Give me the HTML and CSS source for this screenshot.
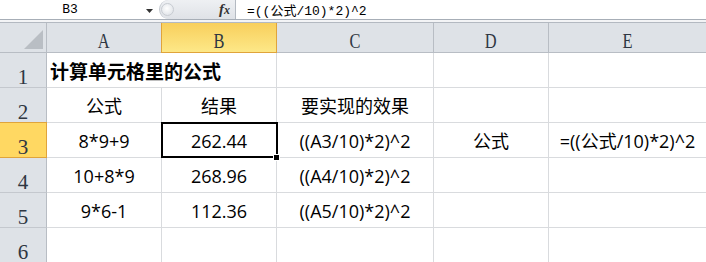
FILE: index.html
```html
<!DOCTYPE html>
<html lang="zh-CN">
<head>
<meta charset="utf-8">
<title>计算单元格里的公式</title>
<link rel="stylesheet" href="styles.css">
</head>
<body>
<div class="fbar">
  <div class="namebox">B3</div>
  <div class="nb-arrow"><svg width="7" height="4" viewBox="0 0 7 4"><polygon points="0,0 7,0 3.5,4" fill="#333"/></svg></div>
  <div class="fx-pill"><span class="knob"></span><span class="fx">f<span class="fx-x">x</span></span></div>
  <div class="formula">=((公式/10)*2)^2</div>
</div>
<div class="fbar-gap"></div>
<div class="sheet">
  <div class="hd corner"><svg width="19" height="19" viewBox="0 0 19 19"><polygon points="19,0 19,19 0,19" fill="#b9bec4"/></svg></div>
  <div class="hd col"><span class="letter">A</span></div>
  <div class="hd col sel-col"><span class="letter">B</span></div>
  <div class="hd col"><span class="letter">C</span></div>
  <div class="hd col"><span class="letter">D</span></div>
  <div class="hd col"><span class="letter">E</span></div>

  <div class="hd row">1</div>
  <div class="cell title span2">计算单元格里的公式</div>
  <div class="cell"></div>
  <div class="cell"></div>
  <div class="cell"></div>

  <div class="hd row">2</div>
  <div class="cell">公式</div>
  <div class="cell">结果</div>
  <div class="cell">要实现的效果</div>
  <div class="cell"></div>
  <div class="cell"></div>

  <div class="hd row sel-row">3</div>
  <div class="cell">8*9+9</div>
  <div class="cell active">262.44<span class="selbox"><span class="handle"></span></span></div>
  <div class="cell">((A3/10)*2)^2</div>
  <div class="cell">公式</div>
  <div class="cell">=((公式/10)*2)^2</div>

  <div class="hd row">4</div>
  <div class="cell">10+8*9</div>
  <div class="cell">268.96</div>
  <div class="cell">((A4/10)*2)^2</div>
  <div class="cell"></div>
  <div class="cell"></div>

  <div class="hd row">5</div>
  <div class="cell">9*6-1</div>
  <div class="cell">112.36</div>
  <div class="cell">((A5/10)*2)^2</div>
  <div class="cell"></div>
  <div class="cell"></div>

  <div class="hd row">6</div>
  <div class="cell"></div>
  <div class="cell"></div>
  <div class="cell"></div>
  <div class="cell"></div>
  <div class="cell"></div>
</div>
</body>
</html>
```

FILE: styles.css
```css
* { box-sizing: border-box; }
html, body { margin: 0; padding: 0; }
body {
  width: 706px;
  height: 262px;
  overflow: hidden;
  background: #fff;
}

.fbar {
  display: flex;
  height: 20px;
  border-bottom: 1px solid #a7aeb7;
  background: #fff;
  font-family: "Liberation Mono", "Noto Sans CJK SC", monospace;
  font-size: 13px;
  color: #000;
}
.namebox {
  width: 140px;
  display: flex;
  align-items: center;
  justify-content: center;
}
.nb-arrow {
  width: 19px;
  display: flex;
  align-items: center;
  justify-content: center;
  padding-top: 2px;
}
.fx-pill {
  width: 77px;
  display: flex;
  align-items: center;
  background: linear-gradient(#eef0f3, #dfe2e7);
  border: 1px solid #c3c8cf;
  border-right: 1px solid #b4bac2;
  border-radius: 10px 0 0 10px;
  border-top: none;
  border-bottom: none;
}
.knob {
  width: 13px;
  height: 13px;
  border-radius: 50%;
  background: radial-gradient(circle at 45% 40%, #ffffff, #e4e7eb 70%, #d2d6dc);
  border: 1px solid #c8ccd2;
  margin-left: 1px;
}
.fx {
  margin-left: auto;
  margin-right: 5px;
  font-family: "Liberation Serif", serif;
  font-style: italic;
  font-weight: bold;
  font-size: 15px;
  color: #333;
  line-height: 1;
}
.fx-x { font-size: 12px; }
.formula {
  padding-left: 11px;
  display: flex;
  align-items: center;
  white-space: nowrap;
}
.fbar-gap {
  height: 3px;
  background: #f3f4f6;
  border-bottom: 1px solid #b3b9c1;
}

.sheet {
  display: grid;
  grid-template-columns: 47px 115px 115px 157px 115px 158px;
  grid-template-rows: 30px repeat(6, 35px);
}

.hd {
  background: #dee2e7;
  border-right: 1px solid #b8bdc4;
  border-bottom: 1px solid #b8bdc4;
  font-family: "Liberation Serif", serif;
  font-size: 21px;
  line-height: 20px;
  color: #2e3642;
  display: flex;
  justify-content: center;
  align-items: flex-end;
}
.corner {
  justify-content: flex-end;
  padding: 0 3px 3px 0;
}
.col { padding-bottom: 1px; }
.letter {
  display: inline-block;
  transform: scaleX(0.78);
}
.row {
  border-bottom-color: #c4c8ce;
  padding-bottom: 0;
}
.sel-col {
  background: linear-gradient(#f8cf5c, #fde888);
  border-right-color: #e0a43b;
  border-bottom-color: #e0a43b;
  box-shadow: -1px 0 0 #e0a43b;
}
.sel-row {
  background: #ffd862;
  border-right-color: #e0a43b;
  border-bottom-color: #e0a43b;
  box-shadow: 0 -1px 0 #e0a43b;
}

.cell {
  border-right: 1px solid #d9dbde;
  border-bottom: 1px solid #d9dbde;
  font-family: "Open Sans", "Noto Sans CJK SC", sans-serif;
  font-size: 18px;
  line-height: 1;
  color: #000;
  display: flex;
  align-items: center;
  justify-content: center;
  white-space: nowrap;
  padding-top: 1px;
}
.span2 { grid-column: span 2; }
.title {
  justify-content: flex-start;
  padding-left: 3px;
  font-family: "Noto Sans CJK SC", sans-serif;
  font-weight: bold;
  font-size: 19px;
}
.active { position: relative; }
.selbox {
  position: absolute;
  left: -1px;
  top: -1px;
  width: 117px;
  height: 36px;
  border: 2px solid #000;
}
.handle {
  position: absolute;
  right: -4px;
  bottom: -5px;
  width: 7px;
  height: 7px;
  background: #000;
  border: 1px solid #fff;
}
```
